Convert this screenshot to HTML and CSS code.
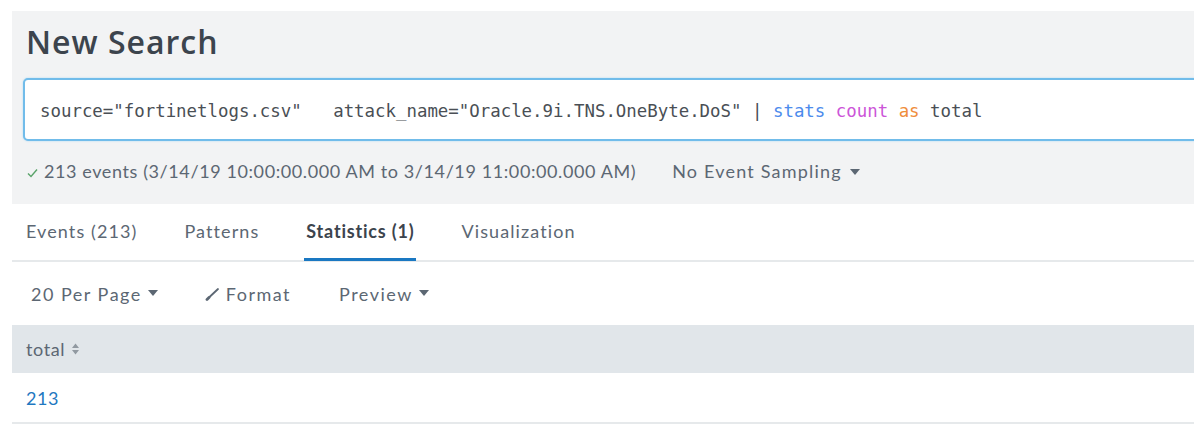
FILE: index.html
```html
<!DOCTYPE html>
<html>
<head>
<meta charset="utf-8">
<link rel="stylesheet" href="styles.css">
</head>
<body>
<div class="page">
  <div class="panel">
    <h1 class="title">New Search</h1>
    <div class="search">
      <div class="query">source="fortinetlogs.csv"   attack_name="Oracle.9i.TNS.OneByte.DoS" <span class="pipe">|</span> <span class="cmd">stats</span> <span class="fn">count</span> <span class="kw">as</span> total</div>
    </div>
    <div class="status">
      <span class="ok"><svg width="11" height="10" viewBox="0 0 11 10"><path d="M1 5.5 L4 8.5 L10 1.5" fill="none" stroke="#5aa36a" stroke-width="1.4"/></svg>213 events (3/14/19 10:00:00.000 AM to 3/14/19 11:00:00.000 AM)</span>
      <span class="sampling">No Event Sampling <span class="caret"></span></span>
    </div>
  </div>
  <div class="tabs">
    <span class="tab">Events (213)</span>
    <span class="tab">Patterns</span>
    <span class="tab active">Statistics (1)</span>
    <span class="tab">Visualization</span>
  </div>
  <div class="toolbar">
    <span class="tool">20 Per Page <span class="caret"></span></span>
    <span class="tool fmt"><svg width="15" height="14" viewBox="0 0 15 14"><path d="M2 12.5 L4 10.5" stroke="#5c6773" stroke-width="2.8" stroke-linecap="round"/><path d="M4.5 10 L13 2" stroke="#5c6773" stroke-width="1.8" stroke-linecap="round"/></svg>Format</span>
    <span class="tool prev">Preview <span class="caret"></span></span>
  </div>
  <div class="thead">
    <span class="th">total <svg width="9" height="14" viewBox="0 0 9 14"><path d="M1 6 L4.5 1.5 L8 6 Z M1 8 L4.5 12.5 L8 8 Z" fill="#9199a1"/></svg></span>
  </div>
  <div class="row"><span class="cell">213</span></div>
</div>
</body>
</html>
```
FILE: styles.css
```css
html, body {
  margin: 0;
  padding: 0;
  background: #ffffff;
}
body {
  font-family: "Lato", "Liberation Sans", sans-serif;
  color: #5c6773;
  letter-spacing: 0.6px;
}
.page {
  width: 1182px;
  margin: 11px 0 0 12px;
  overflow: hidden;
}
.panel {
  background: #f2f3f4;
  height: 193px;
  padding: 0 0 0 11px;
  box-sizing: border-box;
  overflow: hidden;
}
.title {
  margin: 0;
  padding: 11px 0 0 3px;
  height: 54px;
  box-sizing: border-box;
  font-family: "Open Sans", sans-serif;
  font-size: 32px;
  font-weight: 600;
  color: #3c444d;
  line-height: 40px;
  letter-spacing: 1px;
}
.search {
  margin-top: 13px;
  height: 63px;
  width: 1200px;
  box-sizing: border-box;
  background: #fff;
  border: 2px solid #71bcea;
  border-radius: 5px;
  box-shadow: 0 0 2px #a9d7f3;
  display: flex;
  align-items: center;
  padding-left: 15px;
}
.query {
  font-family: "DejaVu Sans Mono", monospace;
  font-size: 17.4px;
  letter-spacing: 0;
  color: #4a4f55;
  white-space: pre;
  margin-top: 2px;
}
.pipe { color: #4a4f55; }
.cmd { color: #4c8bec; }
.fn { color: #cc55d8; }
.kw { color: #ef8d3b; }
.status {
  display: flex;
  align-items: center;
  height: 60px;
  font-size: 18px;
  padding-left: 4px;
}
.ok svg { margin-right: 6px; }
.sampling { margin-left: 36px; letter-spacing: 1.2px; }
.caret {
  display: inline-block;
  width: 0;
  height: 0;
  border-left: 5px solid transparent;
  border-right: 5px solid transparent;
  border-top: 6px solid #5c6773;
  vertical-align: middle;
  margin-left: 2px;
  position: relative;
  top: -1px;
}
.tabs {
  display: flex;
  height: 58px;
  border-bottom: 2px solid #e6e9eb;
  box-sizing: border-box;
  padding-left: 12px;
  font-size: 18px;
  letter-spacing: 1.1px;
}
.tab {
  display: flex;
  align-items: center;
  padding: 0 2px;
  margin-right: 43px;
  border-bottom: 3px solid transparent;
  height: 57px;
  box-sizing: border-box;
}
.tab.active {
  font-weight: 700;
  color: #3c444d;
  border-bottom-color: #1a78c2;
  letter-spacing: 0.8px;
}
.toolbar {
  display: flex;
  align-items: center;
  height: 63px;
  padding-left: 19px;
  font-size: 18px;
  letter-spacing: 1.5px;
}
.tool { display: inline-flex; align-items: center; gap: 4px; }
.fmt { margin-left: 47px; gap: 6px; }
.prev { margin-left: 48px; }
.thead {
  background: #e1e6ea;
  height: 48px;
  display: flex;
  align-items: center;
  padding-left: 14px;
  font-size: 18px;
}
.th { display: inline-flex; align-items: center; gap: 6px; }
.row {
  height: 49px;
  border-bottom: 2px solid #e6e9eb;
  display: flex;
  align-items: center;
  padding-left: 14px;
  font-size: 18px;
}
.cell { color: #1f78c1; }
```
